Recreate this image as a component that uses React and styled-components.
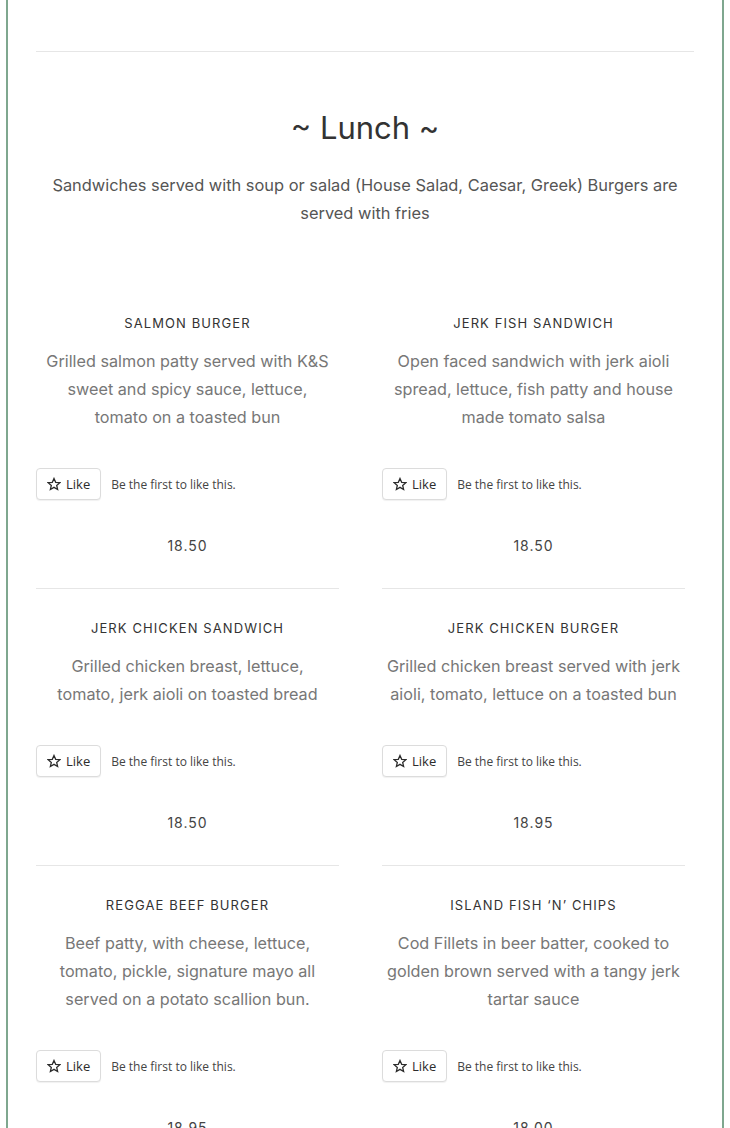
import React from 'react';
import styled, { createGlobalStyle } from 'styled-components';

const GlobalStyle = createGlobalStyle`
  body {
    margin: 0;
    background: #fff;
    font-family: Inter, "Noto Sans", sans-serif;
  }
`;

const Frame = styled.div`
  margin: 0 6px;
  min-height: 1128px;
  box-sizing: border-box;
  border-left: 2px solid #7fa78f;
  border-right: 2px solid #7fa78f;
  padding: 51px 28px 0;
`;

const Rule = styled.hr`
  margin: 0;
  border: 0;
  border-top: 1px solid #e6e6e6;
`;

const Title = styled.h2`
  margin: 55px 0 0;
  text-align: center;
  font-size: 31px;
  line-height: 41px;
  font-weight: 400;
  color: #333;
`;

const Intro = styled.p`
  margin: 23px 0 0;
  text-align: center;
  font-size: 16.4px;
  line-height: 28px;
  color: #555;
  padding: 0 8px;
`;

const Grid = styled.div`
  display: grid;
  grid-template-columns: 303px 303px;
  column-gap: 43px;
  margin-top: 86px;
`;

const Item = styled.div`
  display: flex;
  flex-direction: column;
  align-items: stretch;
  border-bottom: 1px solid #e6e6e6;
  padding-bottom: 32px;
  margin-bottom: 29px;
`;

const Name = styled.h3`
  margin: 0;
  text-align: center;
  font-size: 13px;
  line-height: 20px;
  font-weight: 400;
  letter-spacing: 1.1px;
  color: #333;
`;

const Desc = styled.p`
  margin: 14px -4px 0;
  text-align: center;
  font-size: 16.2px;
  line-height: 28px;
  color: #777;
  flex: 1;
`;

const LikeRow = styled.div`
  display: flex;
  align-items: center;
  gap: 10px;
  margin-top: 37px;
  font-family: "Open Sans", sans-serif;
`;

const LikeButton = styled.button`
  display: flex;
  align-items: center;
  gap: 5px;
  height: 32px;
  box-sizing: border-box;
  padding: 0 10px 0 10px;
  border: 1px solid #dcdcdc;
  border-radius: 4px;
  background: #fff;
  font-family: "Open Sans", sans-serif;
  font-size: 13px;
  color: #2c2c2c;
  box-shadow: 0 1px 1px rgba(0, 0, 0, 0.06);
`;

const LikeText = styled.span`
  font-size: 12px;
  color: #444;
`;

const Price = styled.div`
  margin-top: 36px;
  text-align: center;
  font-size: 14px;
  line-height: 20px;
  letter-spacing: 1px;
  color: #444;
`;

const Star = () => (
  <svg width="14" height="14" viewBox="0 0 24 24" fill="none" stroke="#2c2c2c" strokeWidth="2.2" strokeLinejoin="miter">
    <path d="M12 2.5l2.9 6.6 7.1.6-5.4 4.7 1.6 7-6.2-3.7-6.2 3.7 1.6-7L2 9.7l7.1-.6z" />
  </svg>
);

const items = [
  {
    name: 'Salmon Burger',
    desc: ['Grilled salmon patty served with K&S', 'sweet and spicy sauce, lettuce,', 'tomato on a toasted bun'],
    price: '18.50',
  },
  {
    name: 'Jerk Fish Sandwich',
    desc: ['Open faced sandwich with jerk aioli', 'spread, lettuce, fish patty and house', 'made tomato salsa'],
    price: '18.50',
  },
  {
    name: 'Jerk Chicken Sandwich',
    desc: ['Grilled chicken breast, lettuce,', 'tomato, jerk aioli on toasted bread'],
    price: '18.50',
  },
  {
    name: 'Jerk Chicken Burger',
    desc: ['Grilled chicken breast served with jerk', 'aioli, tomato, lettuce on a toasted bun'],
    price: '18.95',
  },
  {
    name: 'Reggae Beef Burger',
    desc: ['Beef patty, with cheese, lettuce,', 'tomato, pickle, signature mayo all', 'served on a potato scallion bun.'],
    price: '18.95',
  },
  {
    name: 'Island Fish \u2018N\u2019 Chips',
    desc: ['Cod Fillets in beer batter, cooked to', 'golden brown served with a tangy jerk', 'tartar sauce'],
    price: '18.00',
  },
];

export default function App() {
  return (
    <>
      <GlobalStyle />
      <Frame>
        <Rule />
        <Title>~ Lunch ~</Title>
        <Intro>Sandwiches served with soup or salad (House Salad, Caesar, Greek) Burgers are served with fries</Intro>
        <Grid>
          {items.map(item => (
            <Item key={item.name}>
              <Name>{item.name.toUpperCase()}</Name>
              <Desc>
                {item.desc.map((line, i) => (
                  <React.Fragment key={i}>
                    {i > 0 && <br />}
                    {line}
                  </React.Fragment>
                ))}
              </Desc>
              <LikeRow>
                <LikeButton><Star />Like</LikeButton>
                <LikeText>Be the first to like this.</LikeText>
              </LikeRow>
              <Price>{item.price}</Price>
            </Item>
          ))}
        </Grid>
      </Frame>
    </>
  );
}
